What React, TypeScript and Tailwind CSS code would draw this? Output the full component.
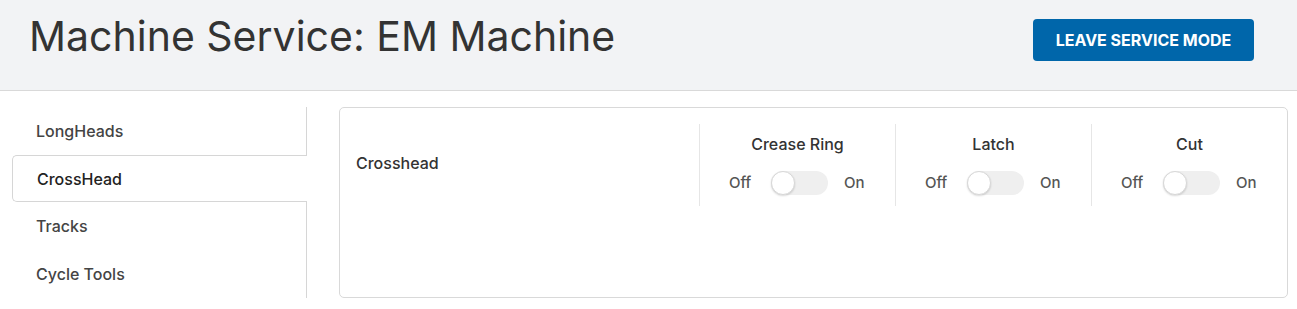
import React from "react";

function Toggle() {
  return (
    <div className="relative w-[57px] h-[24px] rounded-full bg-[#efefef]">
      <div className="absolute left-0 top-0 w-[24px] h-[24px] rounded-full bg-white border border-[#d8d8d8] shadow-[0_1px_2px_rgba(0,0,0,0.15)]" />
    </div>
  );
}

function Control({ title }: { title: string }) {
  return (
    <div className="w-[196px] border-l border-[#e6e6e6] flex flex-col items-center pt-[10px]">
      <div className="text-[16px] font-medium text-[#333] leading-[20px]">{title}</div>
      <div className="flex items-center mt-[17px] text-[15px] font-medium text-[#555]">
        <span className="w-[27px]">Off</span>
        <span className="ml-[15px]"><Toggle /></span>
        <span className="ml-[16px] w-[22px]">On</span>
      </div>
    </div>
  );
}

export default function App() {
  const items = ["LongHeads", "CrossHead", "Tracks", "Cycle Tools"];
  return (
    <div className="w-[1297px] h-[309px] bg-white" style={{ fontFamily: "Inter, 'Noto Sans', sans-serif" }}>
      <div className="h-[91px] bg-[#f2f3f5] border-b border-[#d9d9d9] flex items-start justify-between pl-[29px] pr-[43px]">
        <h1 className="text-[41px] leading-[48px] mt-[12px] text-[#333] font-normal">Machine Service: EM Machine</h1>
        <button className="mt-[19px] w-[221px] h-[42px] rounded-[4px] bg-[#0066aa] text-white text-[16px] font-bold">
          LEAVE SERVICE MODE
        </button>
      </div>
      <div className="flex pt-[16px] pl-[12px]">
        <div className="w-[295px] flex flex-col">
          {items.map((it) =>
            it === "CrossHead" ? (
              <div key={it} className="h-[47px] flex items-center pl-[24px] border border-r-0 border-[#d6d6d6] rounded-l-[5px] text-[16px] font-medium text-[#222]">
                {it}
              </div>
            ) : (
              <div key={it} className="h-[48px] flex items-center pl-[24px] border-r border-[#d6d6d6] text-[16px] font-medium text-[#444]">
                {it}
              </div>
            )
          )}
        </div>
        <div className="ml-[32px] w-[949px] h-[191px] border border-[#d9d9d9] rounded-[5px] flex pt-[16px]">
          <div className="w-[359px] pl-[16px] pt-[27px] text-[16px] font-medium text-[#333]">Crosshead</div>
          <div className="flex h-[82px]">
            <Control title="Crease Ring" />
            <Control title="Latch" />
            <Control title="Cut" />
          </div>
        </div>
      </div>
    </div>
  );
}
